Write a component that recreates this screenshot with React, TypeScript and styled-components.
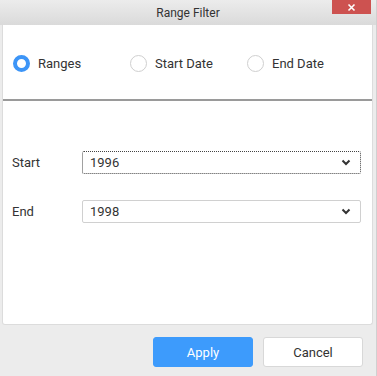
import { FC, useState } from 'react';
import styled, { createGlobalStyle } from 'styled-components';

const GlobalStyle = createGlobalStyle`
  html, body {
    margin: 0;
    padding: 0;
    background: #ececec;
    font-family: Roboto, "Liberation Sans", Arial, sans-serif;
  }
`;

const Window = styled.div`
  width: 377px;
  height: 376px;
  display: flex;
  flex-direction: column;
  background: #ececec;
  border-right: 1px solid #d0d0d0;
  box-sizing: border-box;
`;

const TitleBar = styled.div`
  position: relative;
  height: 25px;
  display: flex;
  align-items: center;
  justify-content: center;
  background: linear-gradient(#ececec, #dadada);
  font-size: 12px;
  color: #333;
`;

const CloseButton = styled.div`
  position: absolute;
  top: 0;
  right: 5px;
  width: 39px;
  height: 14px;
  background: #cd5250;
  display: flex;
  align-items: center;
  justify-content: center;
`;

const Body = styled.div`
  margin: 0 3px 0 2px;
  height: 300px;
  background: #fff;
  border: 1px solid #dcdcdc;
  border-top: none;
  border-radius: 0 0 3px 3px;
  box-sizing: border-box;
  display: flex;
  flex-direction: column;
`;

const RadioRow = styled.div`
  height: 74px;
  display: flex;
  align-items: center;
  padding-left: 10px;
  padding-top: 3px;
  box-sizing: border-box;
`;

const RadioItem = styled.label`
  width: 117px;
  display: flex;
  align-items: center;
  gap: 8px;
  font-size: 13px;
  color: #333;
  cursor: pointer;
`;

const Circle = styled.span<{ $on: boolean }>`
  width: 17px;
  height: 17px;
  border-radius: 50%;
  box-sizing: border-box;
  border: ${p => (p.$on ? '4.5px solid #3d95f7' : '1px solid #cfcfcf')};
  background: #fff;
`;

const Divider = styled.div`
  height: 2px;
  background: #9a9a9a;
`;

const Form = styled.div`
  padding: 50px 11px 0 9px;
  display: flex;
  flex-direction: column;
  gap: 26px;
`;

const FieldRow = styled.div`
  display: flex;
  align-items: center;
`;

const FieldLabel = styled.div`
  width: 70px;
  font-size: 13px;
  color: #333;
`;

const Select = styled.div<{ $focus?: boolean }>`
  flex: 1;
  height: 23px;
  display: flex;
  align-items: center;
  justify-content: space-between;
  padding: 0 9px 0 7px;
  box-sizing: border-box;
  border: 1px solid ${p => (p.$focus ? 'transparent' : '#d0d0d0')};
  outline: ${p => (p.$focus ? '1px dotted #444' : 'none')};
  outline-offset: -1px;
  border-radius: 2px;
  font-size: 13px;
  color: #333;
`;

const Footer = styled.div`
  flex: 1;
  display: flex;
  justify-content: flex-end;
  align-items: flex-start;
  gap: 10px;
  padding: 12px 13px 0 0;
`;

const Button = styled.button<{ $primary?: boolean }>`
  width: 100px;
  height: 30px;
  border-radius: 3px;
  font-family: Roboto, "Liberation Sans", Arial, sans-serif;
  font-size: 13px;
  cursor: pointer;
  background: ${p => (p.$primary ? '#3d9bfc' : '#fff')};
  color: ${p => (p.$primary ? '#fff' : '#333')};
  border: 1px solid ${p => (p.$primary ? '#3d9bfc' : '#d8d8d8')};
`;

const Chevron = () => (
  <svg width="10" height="7" viewBox="0 0 10 7">
    <polyline points="1.5,1.5 5,5 8.5,1.5" fill="none" stroke="#333" strokeWidth="2" />
  </svg>
);

const options = ['Ranges', 'Start Date', 'End Date'];

const App: FC = () => {
  const [mode, setMode] = useState('Ranges');

  return (
    <>
      <GlobalStyle />
      <Window>
        <TitleBar>
          Range Filter
          <CloseButton>
            <svg width="9" height="9" viewBox="0 0 9 9">
              <path d="M1.5 1.5 L7.5 7.5 M7.5 1.5 L1.5 7.5" stroke="#fff" strokeWidth="1.6" />
            </svg>
          </CloseButton>
        </TitleBar>
        <Body>
          <RadioRow>
            {options.map(o => (
              <RadioItem key={o} onClick={() => setMode(o)}>
                <Circle $on={mode === o} />
                {o}
              </RadioItem>
            ))}
          </RadioRow>
          <Divider />
          <Form>
            <FieldRow>
              <FieldLabel>Start</FieldLabel>
              <Select $focus>
                1996
                <Chevron />
              </Select>
            </FieldRow>
            <FieldRow>
              <FieldLabel>End</FieldLabel>
              <Select>
                1998
                <Chevron />
              </Select>
            </FieldRow>
          </Form>
        </Body>
        <Footer>
          <Button $primary>Apply</Button>
          <Button>Cancel</Button>
        </Footer>
      </Window>
    </>
  );
};

export default App;
